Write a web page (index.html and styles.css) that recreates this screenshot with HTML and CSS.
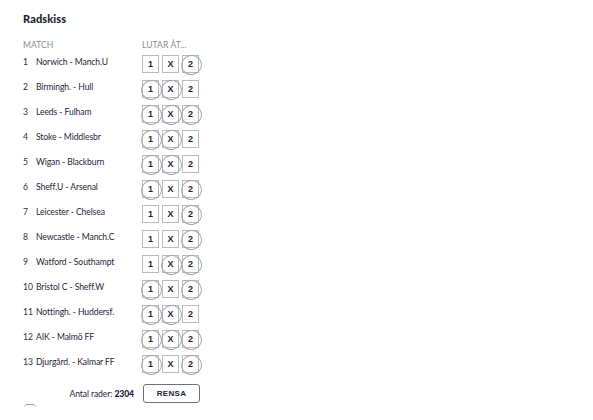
FILE: index.html
```html
<!DOCTYPE html>
<html lang="sv">
<head>
<meta charset="utf-8">
<title>Radskiss</title>
<link rel="stylesheet" href="styles.css">
</head>
<body>
<div class="panel">
  <h1 class="title">Radskiss</h1>
  <div class="head">
    <span class="h-match">MATCH</span>
    <span class="h-lutar">LUTAR ÅT...</span>
  </div>
  <div class="rows">
    <div class="row"><span class="num">1</span><span class="team">Norwich - Manch.U</span><div class="picks"><span class="box">1</span><span class="box">X</span><span class="box on">2</span></div></div>
    <div class="row"><span class="num">2</span><span class="team">Birmingh. - Hull</span><div class="picks"><span class="box on">1</span><span class="box on">X</span><span class="box">2</span></div></div>
    <div class="row"><span class="num">3</span><span class="team">Leeds - Fulham</span><div class="picks"><span class="box on">1</span><span class="box on">X</span><span class="box on">2</span></div></div>
    <div class="row"><span class="num">4</span><span class="team">Stoke - Middlesbr</span><div class="picks"><span class="box on">1</span><span class="box on">X</span><span class="box">2</span></div></div>
    <div class="row"><span class="num">5</span><span class="team">Wigan - Blackburn</span><div class="picks"><span class="box on">1</span><span class="box on">X</span><span class="box">2</span></div></div>
    <div class="row"><span class="num">6</span><span class="team">Sheff.U - Arsenal</span><div class="picks"><span class="box on">1</span><span class="box">X</span><span class="box on">2</span></div></div>
    <div class="row"><span class="num">7</span><span class="team">Leicester - Chelsea</span><div class="picks"><span class="box">1</span><span class="box">X</span><span class="box on">2</span></div></div>
    <div class="row"><span class="num">8</span><span class="team">Newcastle - Manch.C</span><div class="picks"><span class="box">1</span><span class="box">X</span><span class="box on">2</span></div></div>
    <div class="row"><span class="num">9</span><span class="team">Watford - Southampt</span><div class="picks"><span class="box">1</span><span class="box on">X</span><span class="box on">2</span></div></div>
    <div class="row"><span class="num">10</span><span class="team">Bristol C - Sheff.W</span><div class="picks"><span class="box on">1</span><span class="box">X</span><span class="box on">2</span></div></div>
    <div class="row"><span class="num">11</span><span class="team">Nottingh. - Huddersf.</span><div class="picks"><span class="box on">1</span><span class="box on">X</span><span class="box">2</span></div></div>
    <div class="row"><span class="num">12</span><span class="team">AIK - Malmö FF</span><div class="picks"><span class="box on">1</span><span class="box on">X</span><span class="box on">2</span></div></div>
    <div class="row"><span class="num">13</span><span class="team">Djurgård. - Kalmar FF</span><div class="picks"><span class="box on">1</span><span class="box">X</span><span class="box on">2</span></div></div>
  </div>
  <div class="footer">
    <span class="count">Antal rader: <b>2304</b></span>
    <button class="clear" type="button">RENSA</button>
  </div>
  <div class="stub"></div>
</div>
</body>
</html>
```

FILE: styles.css
```css
* { box-sizing: border-box; }
html, body { margin: 0; padding: 0; background: #fff; }
body {
  font-family: "Lato", "Open Sans", "Liberation Sans", sans-serif;
  color: #1f2438;
  width: 593px;
  height: 420px;
  overflow: hidden;
}
.panel {
  padding: 12px 0 0 23px;
  width: 200px;
}
.title {
  margin: 0;
  font-size: 11px;
  font-weight: 900;
  line-height: 14px;
  color: #1a1f33;
  letter-spacing: 0.1px;
}
.head {
  display: grid;
  grid-template-columns: 119px 1fr;
  margin-top: 13px;
  font-size: 8.5px;
  line-height: 12px;
  color: #8a8d99;
  letter-spacing: 0.1px;
}
.rows {
  display: flex;
  flex-direction: column;
  gap: 7px;
  margin-top: 4px;
}
.row {
  display: grid;
  grid-template-columns: 13px 106px auto;
  align-items: center;
  height: 18px;
  font-size: 8.6px;
}
.num { color: #2a2f45; }
.team {
  color: #1f2438;
  margin-top: -4px;
  letter-spacing: -0.1px;
  white-space: nowrap;
}
.num { margin-top: -4px; }
.picks {
  display: flex;
  gap: 3px;
}
.box {
  position: relative;
  width: 17px;
  height: 18px;
  border: 1px solid #b9bbc2;
  display: flex;
  align-items: center;
  justify-content: center;
  font-size: 9px;
  font-weight: 900;
  color: #1a1f33;
  font-family: "Liberation Sans", sans-serif;
}
.box.on::after {
  content: "";
  position: absolute;
  left: -2px;
  top: -1px;
  width: 19px;
  height: 18px;
  border: 1px solid #a5a7ae;
  border-radius: 50%;
  transform: rotate(-12deg);
}
.footer {
  display: flex;
  align-items: center;
  justify-content: flex-end;
  gap: 9px;
  margin-top: 11px;
  width: 177px;
}
.count {
  font-size: 8.6px;
  color: #1f2438;
  letter-spacing: -0.1px;
}
.count b { font-weight: 900; }
.clear {
  width: 57px;
  height: 19px;
  border: 1px solid #6d707c;
  border-radius: 3px;
  background: #fff;
  font-family: "Liberation Sans", sans-serif;
  font-weight: 700;
  font-size: 8px;
  color: #1a1f33;
  letter-spacing: 0.3px;
  padding: 0;
}
.stub {
  margin-top: 1px;
  margin-left: 1px;
  width: 12px;
  height: 4px;
  border-top: 1px solid #9a9ca4;
  border-radius: 6px 6px 0 0;
}
```
